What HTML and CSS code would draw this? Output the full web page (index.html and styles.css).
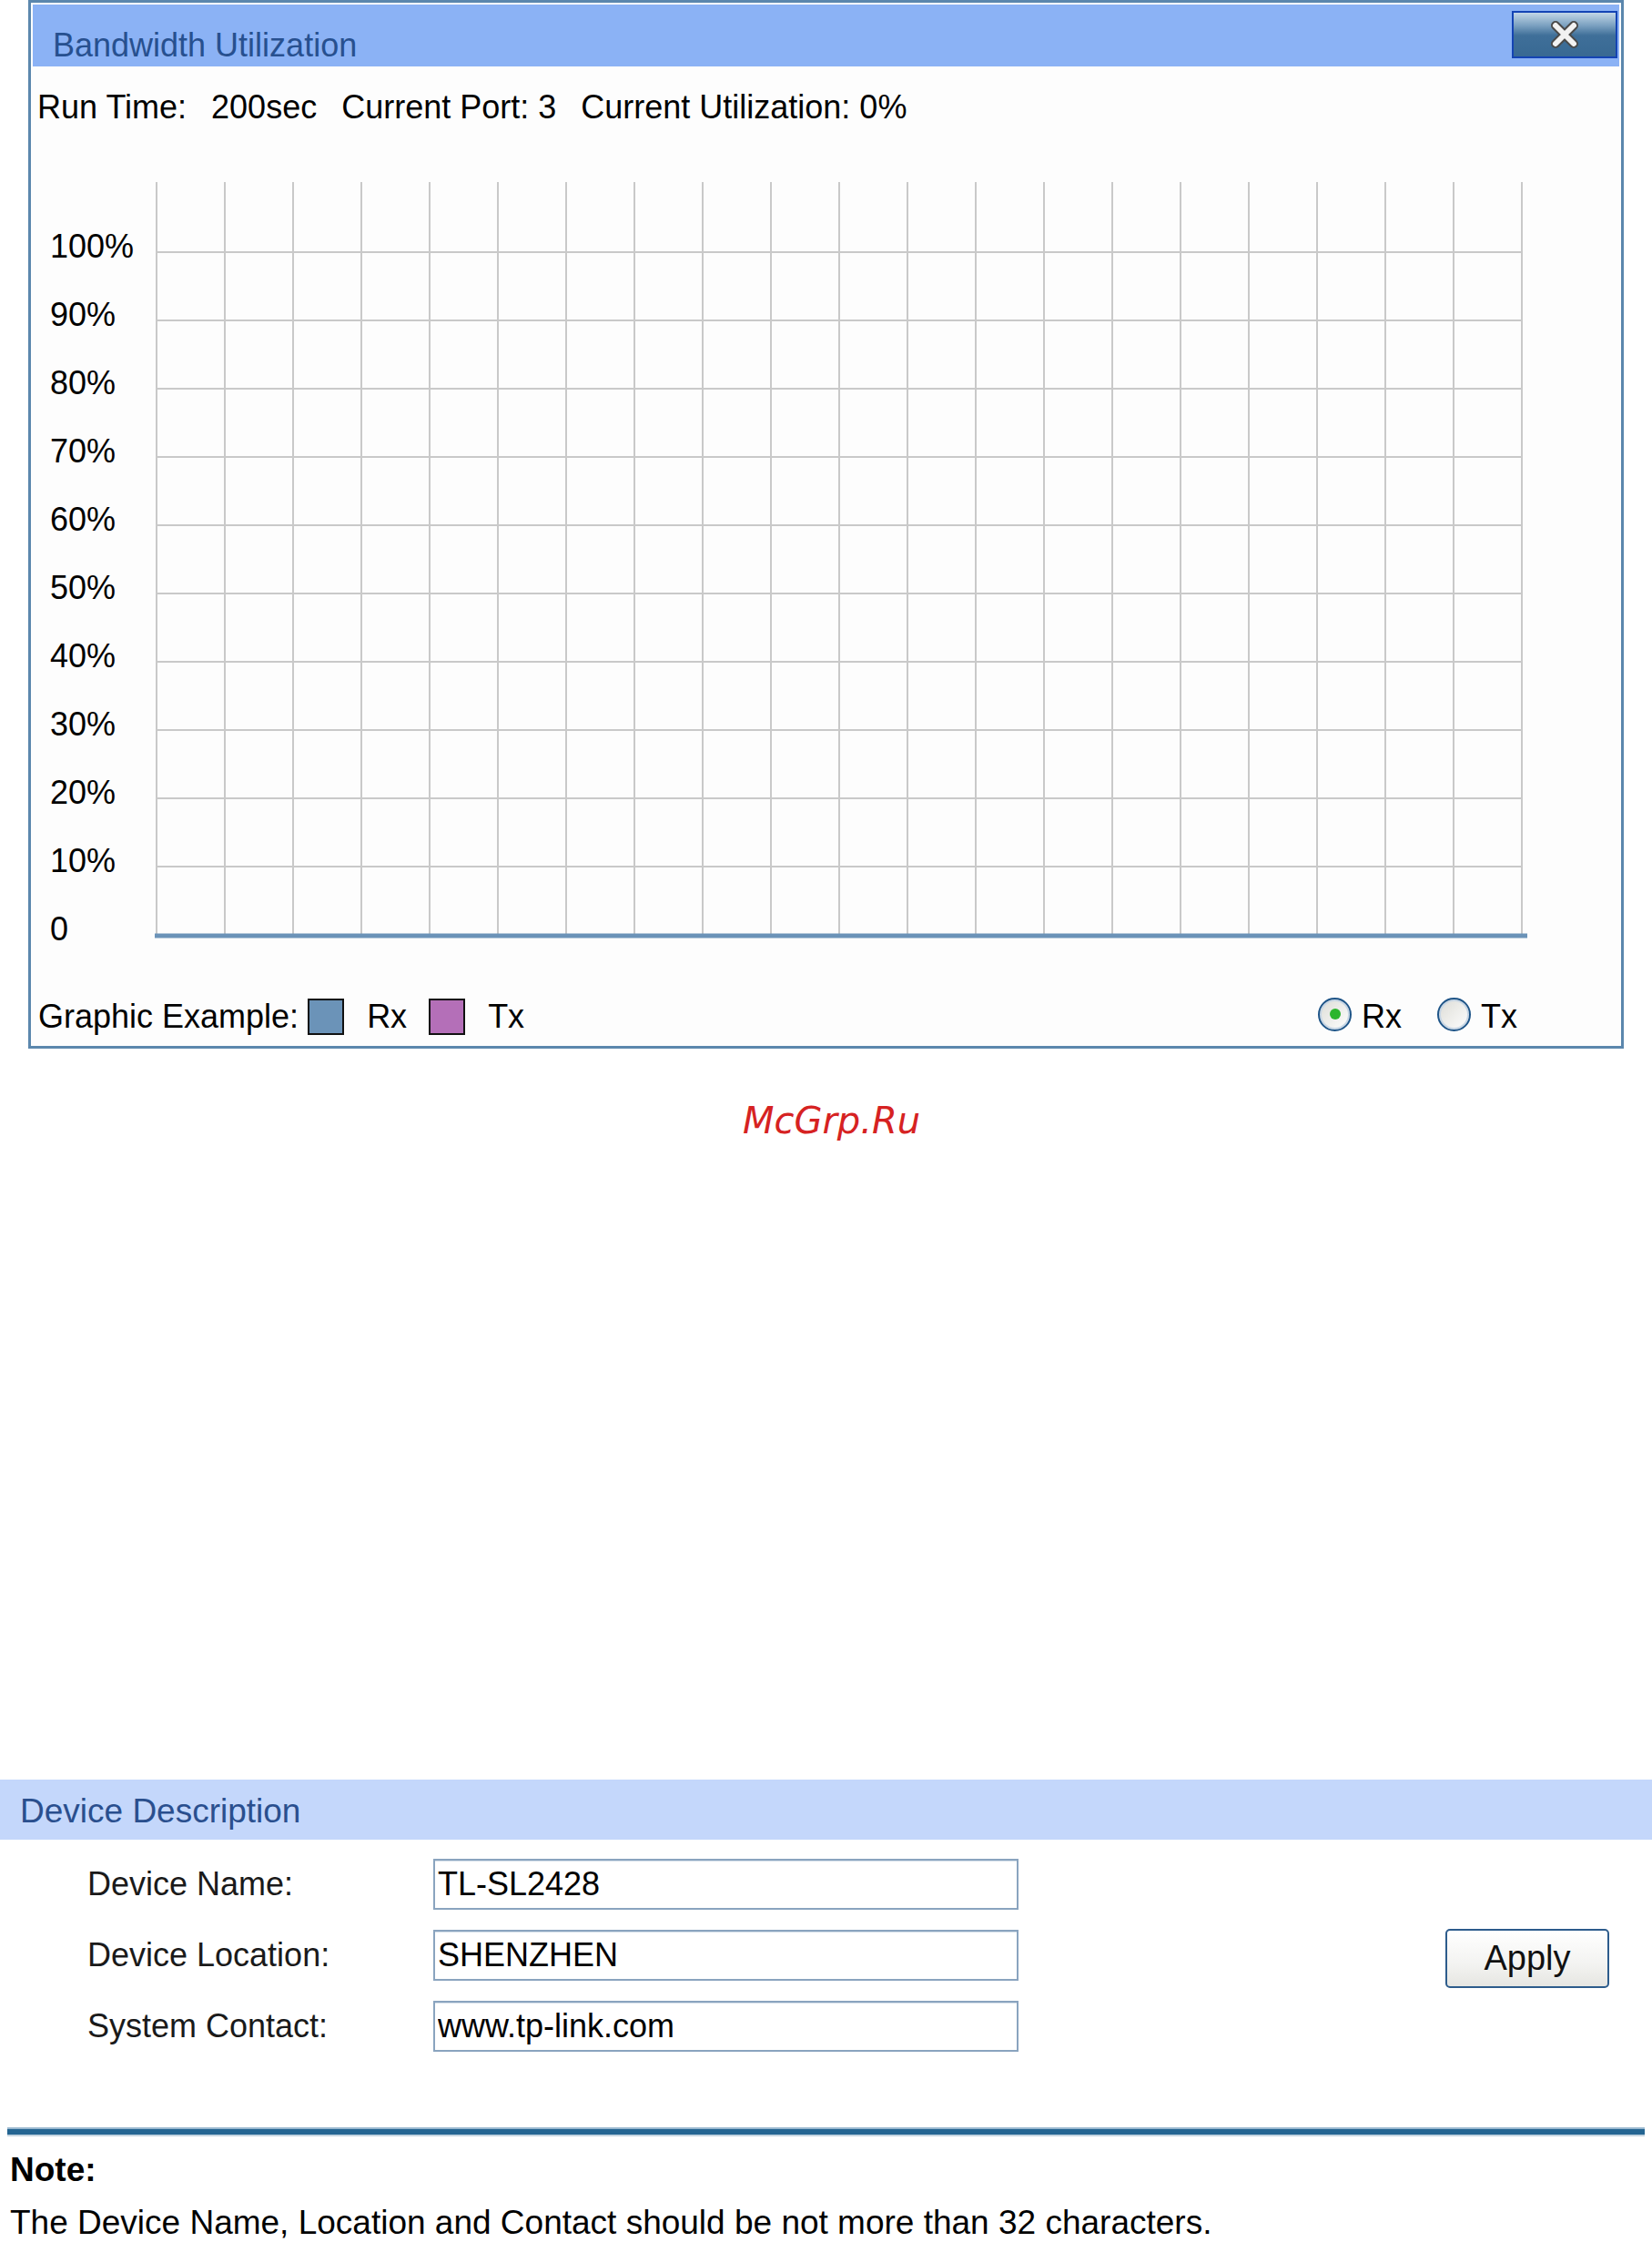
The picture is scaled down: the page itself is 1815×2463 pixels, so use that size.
FILE: index.html
```html
<!DOCTYPE html>
<html lang="en">
<head>
  <meta charset="UTF-8" />
  <meta name="viewport" content="width=device-width, initial-scale=1.0"/>
  <title>Bandwidth Utilization</title>
  <link rel="stylesheet" href="styles.css">
</head>
<body>

  <!-- Bandwidth popup -->
  <div class="panel">
    <div class="panel-title">
      <span class="title-text">Bandwidth Utilization</span>
      <button class="close-btn" title="Close">
        <svg width="34" height="30" viewBox="0 0 34 30">
          <path d="M7 5 L27 25 M27 5 L7 25" stroke="#4a4a4a" stroke-width="10" stroke-linecap="round"/>
          <path d="M7 5 L27 25 M27 5 L7 25" stroke="#f2f2f2" stroke-width="6" stroke-linecap="round"/>
        </svg>
      </button>
    </div>

    <div class="info">
      <span>Run Time:</span>
      <span>200sec</span>
      <span>Current Port: 3</span>
      <span>Current Utilization: 0%</span>
    </div>

    <div class="chart">
      <div class="y-labels">
        <div>100%</div>
        <div>90%</div>
        <div>80%</div>
        <div>70%</div>
        <div>60%</div>
        <div>50%</div>
        <div>40%</div>
        <div>30%</div>
        <div>20%</div>
        <div>10%</div>
        <div>0</div>
      </div>
      <svg class="grid" width="1510" height="835" viewBox="0 0 1510 835">
        <g stroke="#c9c9c9" stroke-width="2">
          <line x1="2" y1="0" x2="2" y2="828"/>
          <line x1="77" y1="0" x2="77" y2="828"/>
          <line x1="152" y1="0" x2="152" y2="828"/>
          <line x1="227" y1="0" x2="227" y2="828"/>
          <line x1="302" y1="0" x2="302" y2="828"/>
          <line x1="377" y1="0" x2="377" y2="828"/>
          <line x1="452" y1="0" x2="452" y2="828"/>
          <line x1="527" y1="0" x2="527" y2="828"/>
          <line x1="602" y1="0" x2="602" y2="828"/>
          <line x1="677" y1="0" x2="677" y2="828"/>
          <line x1="752" y1="0" x2="752" y2="828"/>
          <line x1="827" y1="0" x2="827" y2="828"/>
          <line x1="902" y1="0" x2="902" y2="828"/>
          <line x1="977" y1="0" x2="977" y2="828"/>
          <line x1="1052" y1="0" x2="1052" y2="828"/>
          <line x1="1127" y1="0" x2="1127" y2="828"/>
          <line x1="1202" y1="0" x2="1202" y2="828"/>
          <line x1="1277" y1="0" x2="1277" y2="828"/>
          <line x1="1352" y1="0" x2="1352" y2="828"/>
          <line x1="1427" y1="0" x2="1427" y2="828"/>
          <line x1="1502" y1="0" x2="1502" y2="828"/>
          <line x1="2" y1="77" x2="1502" y2="77"/>
          <line x1="2" y1="152" x2="1502" y2="152"/>
          <line x1="2" y1="227" x2="1502" y2="227"/>
          <line x1="2" y1="302" x2="1502" y2="302"/>
          <line x1="2" y1="377" x2="1502" y2="377"/>
          <line x1="2" y1="452" x2="1502" y2="452"/>
          <line x1="2" y1="527" x2="1502" y2="527"/>
          <line x1="2" y1="602" x2="1502" y2="602"/>
          <line x1="2" y1="677" x2="1502" y2="677"/>
          <line x1="2" y1="752" x2="1502" y2="752"/>
        </g>
        <line x1="0" y1="828" x2="1508" y2="828" stroke="#6b93b8" stroke-width="5"/>
      </svg>
    </div>

    <div class="legend">
      <span>Graphic Example:</span>
      <span class="swatch rx"></span>
      <span class="legend-name">Rx</span>
      <span class="swatch tx"></span>
      <span class="legend-name">Tx</span>

      <div class="radios">
        <label><span class="radio on"></span>Rx</label>
        <label><span class="radio"></span>Tx</label>
      </div>
    </div>
  </div>

  <div class="watermark">McGrp.Ru</div>

  <!-- Device Description -->
  <div class="section">
    <div class="section-title">Device Description</div>
    <div class="form">
      <div class="fields">
        <div class="row">
          <label>Device Name:</label>
          <input type="text" value="TL-SL2428">
        </div>
        <div class="row">
          <label>Device Location:</label>
          <input type="text" value="SHENZHEN">
        </div>
        <div class="row">
          <label>System Contact:</label>
          <input type="text" value="www.tp-link.com">
        </div>
      </div>
      <button class="apply-btn">Apply</button>
    </div>
  </div>

  <div class="divider"></div>

  <div class="note">
    <p class="note-title">Note:</p>
    <p>The Device Name, Location and Contact should be not more than 32 characters.</p>
  </div>

</body>
</html>
```

FILE: styles.css
```css
body {
  margin: 0;
  font-family: "Liberation Sans", Arial, sans-serif;
  font-size: 36px;
  color: #000;
  background-color: #fff;
}

.panel {
  margin-left: 31px;
  width: 1753px;
  box-sizing: border-box;
  border: 3px solid #5b87ad;
  padding: 2px 2px 0 2px;
  background-color: #fdfdfd;
}

.panel-title {
  height: 68px;
  background-color: #8bb2f5;
  display: flex;
  justify-content: space-between;
  align-items: center;
  padding-left: 22px;
  color: #27508f;
  font-size: 36px;
}

.title-text {
  padding-top: 22px;
}

.close-btn {
  width: 116px;
  height: 52px;
  margin-right: 2px;
  margin-top: -2px;
  border: 2px solid #1444b4;
  background: linear-gradient(#c2d6e6 0%, #7ea3c2 28%, #3f6f99 52%, #386993 100%);
  display: flex;
  align-items: center;
  justify-content: center;
  padding: 0;
  cursor: pointer;
}

.info {
  margin-top: 23px;
  height: 44px;
  line-height: 44px;
  padding-left: 5px;
  display: flex;
  gap: 27px;
}

.chart {
  margin-top: 60px;
  display: flex;
  align-items: flex-start;
}

.y-labels {
  width: 115px;
  padding-left: 19px;
  padding-top: 33px;
}

.y-labels div {
  height: 75px;
  line-height: 75px;
}

.grid {
  display: block;
}

.legend {
  margin-top: 37px;
  margin-bottom: 10px;
  height: 44px;
  padding-left: 6px;
  display: flex;
  align-items: center;
}

.swatch {
  width: 36px;
  height: 36px;
  border: 2px solid #111;
  margin-left: 10px;
  margin-right: 25px;
}

.swatch.rx {
  background-color: #6b93b8;
}

.swatch.tx {
  background-color: #b46fb8;
}

.legend-name {
  margin-right: 14px;
}

.radios {
  margin-left: auto;
  margin-right: 112px;
  display: flex;
  gap: 39px;
}

.radios label {
  display: flex;
  align-items: center;
  gap: 11px;
}

.radio {
  width: 33px;
  height: 33px;
  border: 2px solid #1f5588;
  border-radius: 50%;
  box-shadow: inset 0 0 0 2px #c9d7e5;
  background: linear-gradient(135deg, #dcdcd6, #ffffff);
  display: flex;
  align-items: center;
  justify-content: center;
  margin-top: -6px;
}

.radio.on::after {
  content: "";
  width: 12px;
  height: 12px;
  border-radius: 50%;
  background-color: #2cb52c;
}

.watermark {
  margin-top: 53px;
  text-align: center;
  padding-left: 12px;
  font-family: "DejaVu Sans", sans-serif;
  font-style: italic;
  font-size: 40px;
  line-height: 52px;
  color: #d62222;
}

.section {
  margin-top: 698px;
}

.section-title {
  height: 66px;
  line-height: 70px;
  background-color: #c4d7fb;
  padding-left: 22px;
  color: #2a4f8e;
  font-size: 37px;
}

.form {
  display: flex;
  align-items: center;
  padding-top: 21px;
  padding-bottom: 83px;
}

.fields {
  display: flex;
  flex-direction: column;
  gap: 22px;
}

.row {
  display: flex;
  align-items: center;
}

.row label {
  width: 476px;
  padding-left: 96px;
  box-sizing: border-box;
  color: #1a1a1a;
}

.row input {
  width: 643px;
  height: 56px;
  box-sizing: border-box;
  border: 2px solid #8aa4bf;
  box-shadow: inset 0 1px 0 #d5dfe9;
  padding: 0 3px;
  font-family: "Liberation Sans", Arial, sans-serif;
  font-size: 36px;
  color: #000;
  background-color: #fff;
}

.apply-btn {
  margin-left: auto;
  margin-right: 47px;
  margin-top: 6px;
  width: 180px;
  height: 65px;
  border: 2px solid #2d5c8c;
  border-radius: 5px;
  background: linear-gradient(#ffffff, #f3f3f1 60%, #e6e6e2);
  font-family: "Liberation Sans", Arial, sans-serif;
  font-size: 38px;
  color: #111;
  cursor: pointer;
}

.divider {
  margin: 0 8px;
  height: 6px;
  background-color: #246592;
  border-top: 2px solid #9ab8cf;
  border-bottom: 2px solid #c4d4e0;
}

.note {
  padding-left: 11px;
  margin-top: 15px;
  font-size: 37px;
}

.note p {
  margin: 0;
  line-height: 44px;
}

.note .note-title {
  font-weight: bold;
  margin-bottom: 14px;
}
```
